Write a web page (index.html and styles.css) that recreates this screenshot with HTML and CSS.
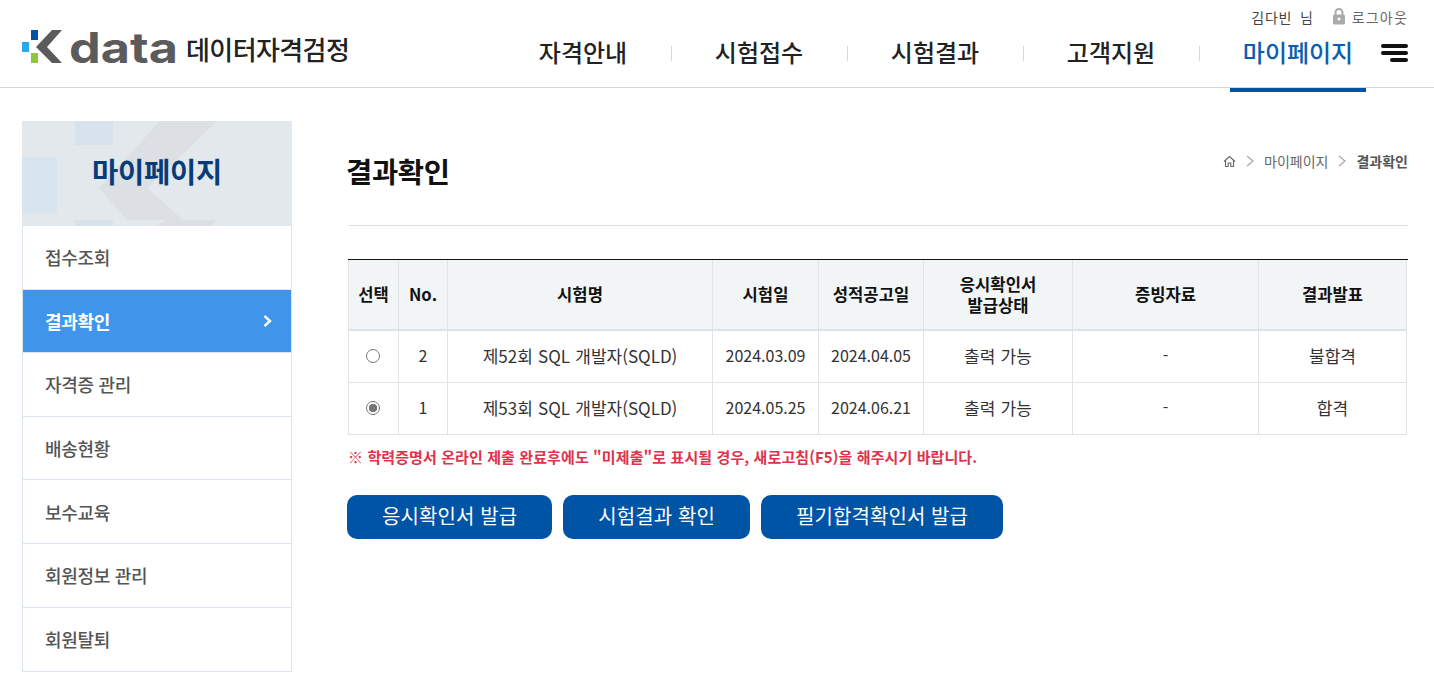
FILE: index.html
```html
<!DOCTYPE html>
<html lang="ko">
<head>
  <meta charset="UTF-8" />
  <meta name="viewport" content="width=device-width, initial-scale=1.0"/>
  <title>결과확인 - 데이터자격검정</title>
  <link rel="stylesheet" href="styles.css">
</head>
<body>

  <header class="topo">
    <a class="logo" href="#">
      <svg class="logo-marca" width="40" height="34" viewBox="0 0 40 34" aria-hidden="true">
        <rect x="9" y="0" width="7" height="10" fill="#0054a6"/>
        <rect x="0" y="12" width="7" height="10" fill="#29a8ea"/>
        <rect x="9" y="23" width="7" height="10" fill="#8dc63f"/>
        <polygon points="30,0 40,0 25,17 40,33 30,33 14,17" fill="#5b5b5b"/>
      </svg>
      <span class="logo-data">data</span>
      <span class="logo-nome">데이터자격검정</span>
    </a>
    <div class="topo-direita">
      <div class="usuario">
        <span class="usuario-nome">김다빈 님</span>
        <span class="sair">
          <svg width="14" height="17" viewBox="0 0 14 17" aria-hidden="true">
            <path d="M3.5 7V4.5a3.5 3.5 0 0 1 7 0V7" fill="none" stroke="#aaa" stroke-width="2"/>
            <rect x="1" y="6.5" width="12" height="10" rx="1.5" fill="#aaa"/>
            <circle cx="7" cy="11" r="1.5" fill="#fff"/>
          </svg>
          로그아웃
        </span>
      </div>
      <nav class="menu">
        <a class="menu-item" href="#">자격안내</a>
        <a class="menu-item" href="#">시험접수</a>
        <a class="menu-item" href="#">시험결과</a>
        <a class="menu-item" href="#">고객지원</a>
        <a class="menu-item ativo" href="#">마이페이지</a>
        <div class="hamburguer"><i></i><i></i><i></i></div>
      </nav>
    </div>
  </header>

  <div class="conteudo">
    <aside class="lateral">
      <div class="lateral-topo">
        <svg class="lateral-fundo" width="270" height="105" viewBox="0 0 270 105" aria-hidden="true">
          <rect x="53" y="0" width="38" height="24" fill="#d8e2ec"/>
          <rect x="0" y="36" width="35" height="57" fill="#d8e4ee"/>
          <rect x="53" y="99" width="38" height="6" fill="#d8e2ec"/>
          <polygon points="138,0 195,0 125,67 161,99 105,99 77,67" fill="#dcdfe3"/>
          <polygon points="143,99 195,99 188,105 135,105" fill="#dcdfe3"/>
        </svg>
        <h2>마이페이지</h2>
      </div>
      <ul class="lateral-menu">
        <li><a href="#">접수조회</a></li>
        <li class="ativo"><a href="#">결과확인
          <svg width="9" height="12" viewBox="0 0 9 12" aria-hidden="true"><polyline points="1.5,1 7,6 1.5,11" fill="none" stroke="#fff" stroke-width="2.4"/></svg>
        </a></li>
        <li><a href="#">자격증 관리</a></li>
        <li><a href="#">배송현황</a></li>
        <li><a href="#">보수교육</a></li>
        <li><a href="#">회원정보 관리</a></li>
        <li><a href="#">회원탈퇴</a></li>
      </ul>
    </aside>

    <main class="principal">
      <div class="titulo-linha">
        <h1>결과확인</h1>
        <div class="trilha">
          <svg width="13" height="13" viewBox="0 0 13 13" aria-hidden="true">
            <path d="M1 6.5 6.5 1.5 12 6.5M2.5 5.5V11.5H5.2V8H7.8V11.5H10.5V5.5" fill="none" stroke="#666" stroke-width="1.1"/>
          </svg>
          <svg class="seta" width="8" height="12" viewBox="0 0 8 12" aria-hidden="true"><polyline points="1,1 7,6 1,11" fill="none" stroke="#aaa" stroke-width="1.4"/></svg>
          <span>마이페이지</span>
          <svg class="seta" width="8" height="12" viewBox="0 0 8 12" aria-hidden="true"><polyline points="1,1 7,6 1,11" fill="none" stroke="#aaa" stroke-width="1.4"/></svg>
          <strong>결과확인</strong>
        </div>
      </div>

      <div class="tabela-caixa">
        <table class="tabela">
          <colgroup>
            <col class="c1"><col class="c2"><col class="c3"><col class="c4"><col class="c5"><col class="c6"><col class="c7"><col class="c8">
          </colgroup>
          <thead>
            <tr>
              <th>선택</th><th>No.</th><th>시험명</th><th>시험일</th><th>성적공고일</th><th>응시확인서<br>발급상태</th><th>증빙자료</th><th>결과발표</th>
            </tr>
          </thead>
          <tbody>
            <tr>
              <td><span class="radio"></span></td><td>2</td><td class="kr">제52회 SQL 개발자(SQLD)</td><td>2024.03.09</td><td>2024.04.05</td><td class="kr">출력 가능</td><td>-</td><td class="kr">불합격</td>
            </tr>
            <tr>
              <td><span class="radio marcado"></span></td><td>1</td><td class="kr">제53회 SQL 개발자(SQLD)</td><td>2024.05.25</td><td>2024.06.21</td><td class="kr">출력 가능</td><td>-</td><td class="kr">합격</td>
            </tr>
          </tbody>
        </table>
      </div>

      <p class="aviso">※ 학력증명서 온라인 제출 완료후에도 "미제출"로 표시될 경우, 새로고침(F5)을 해주시기 바랍니다.</p>

      <div class="botoes">
        <a class="botao" href="#">응시확인서 발급</a>
        <a class="botao" href="#">시험결과 확인</a>
        <a class="botao" href="#">필기합격확인서 발급</a>
      </div>
    </main>
  </div>

</body>
</html>
```

FILE: styles.css
```css
* {
  box-sizing: border-box;
}

html, body {
  margin: 0;
  height: 696px;
  overflow: hidden;
}

body {
  font-family: "Noto Sans CJK KR", "Noto Sans", sans-serif;
  background: #fff;
  color: #222;
}

a {
  color: inherit;
  text-decoration: none;
}

/* topo */
.topo {
  display: flex;
  justify-content: space-between;
  height: 88px;
  padding: 0 26px 0 22px;
  border-bottom: 1px solid #d5d5d5;
}

.logo {
  display: flex;
  align-items: flex-start;
  padding-top: 30px;
}

.logo-marca {
  flex: none;
}

.logo-data {
  width: 117px;
  margin-top: 2px;
  margin-left: 7px;
  font-family: "Inter", sans-serif;
  font-size: 42px;
  font-weight: 700;
  line-height: 32px;
  color: #5b5b5b;
  transform: scaleX(1.2);
  transform-origin: left center;
}

.logo-nome {
  font-size: 26px;
  font-weight: 500;
  line-height: 38px;
  letter-spacing: -0.6px;
  color: #222;
}

.topo-direita {
  display: flex;
  flex-direction: column;
  align-items: flex-end;
}

.usuario {
  display: flex;
  flex: none;
  align-items: center;
  gap: 18px;
  height: 33px;
  font-size: 14px;
  letter-spacing: 1.2px;
  color: #555;
}

.usuario-nome {
  color: #444;
  letter-spacing: 0.8px;
  word-spacing: 3px;
}

.sair {
  display: flex;
  align-items: center;
  gap: 6px;
  color: #666;
}

.menu {
  display: flex;
  flex: none;
  align-items: flex-start;
}

.menu-item {
  position: relative;
  display: block;
  width: 176px;
  height: 55px;
  text-align: center;
  font-size: 24px;
  font-weight: 500;
  line-height: 38px;
  color: #222;
}

.menu-item + .menu-item::before {
  content: "";
  position: absolute;
  left: 0;
  top: 13px;
  width: 1px;
  height: 15px;
  background: #d8d8d8;
}

.menu-item.ativo {
  width: 136px;
  margin-left: 31px;
  color: #0a5eb0;
}

.menu-item.ativo::before {
  left: -31px;
}

.menu-item.ativo::after {
  content: "";
  position: absolute;
  left: 0;
  right: 0;
  top: 55px;
  height: 4px;
  background: #0054a6;
}

.hamburguer {
  display: flex;
  flex-direction: column;
  align-items: flex-end;
  gap: 3px;
  width: 27px;
  margin-left: 15px;
  padding-top: 10.5px;
}

.hamburguer i {
  display: block;
  width: 27px;
  height: 4px;
  border-radius: 2px;
  background: #111;
}

.hamburguer i:last-child {
  width: 18px;
}

/* conteudo */
.conteudo {
  display: flex;
  gap: 56px;
  padding: 33px 26px 0 22px;
}

.lateral {
  width: 270px;
  flex: none;
}

.lateral-topo {
  position: relative;
  display: flex;
  align-items: center;
  justify-content: center;
  height: 105px;
  padding-bottom: 6px;
  overflow: hidden;
  background: #e3e8ed;
}

.lateral-fundo {
  position: absolute;
  left: 0;
  top: 0;
}

.lateral-topo h2 {
  position: relative;
  margin: 0;
  font-size: 28.5px;
  font-weight: 700;
  letter-spacing: -0.2px;
  color: #073c78;
}

.lateral-menu {
  margin: 0;
  padding: 0;
  list-style: none;
  border: 1px solid #dbe4ec;
  border-top: 0;
}

.lateral-menu li {
  height: 63.6px;
  border-bottom: 1px solid #dbe4ec;
}

.lateral-menu li:last-child {
  border-bottom: 0;
}

.lateral-menu a {
  display: flex;
  align-items: center;
  justify-content: space-between;
  height: 100%;
  padding: 0 19px 0 22px;
  font-size: 18px;
  font-weight: 500;
  letter-spacing: -0.3px;
  color: #555;
}

.lateral-menu .ativo {
  background: #4095ea;
}

.lateral-menu .ativo a {
  font-weight: 700;
  color: #fff;
}

/* principal */
.principal {
  flex: 1;
}

.titulo-linha {
  display: flex;
  justify-content: space-between;
  height: 105px;
  border-bottom: 1px solid #e0e0e0;
}

.titulo-linha h1 {
  margin: 30px 0 0 -2px;
  font-size: 28.5px;
  font-weight: 700;
  line-height: 40px;
  letter-spacing: -0.3px;
  color: #111;
}

.trilha {
  display: flex;
  align-items: center;
  gap: 8px;
  height: 20px;
  margin-top: 30px;
  font-size: 14px;
  color: #666;
}

.trilha strong {
  font-weight: 700;
  color: #555;
}

.seta {
  margin: 0 2px;
}

.tabela-caixa {
  margin-top: 33px;
  border-top: 1px solid #111;
}

.tabela {
  width: 1059px;
  border-collapse: collapse;
  table-layout: fixed;
  font-size: 16px;
}

.c1 { width: 50px; }
.c2 { width: 49px; }
.c3 { width: 265px; }
.c4 { width: 106px; }
.c5 { width: 105px; }
.c6 { width: 149px; }
.c7 { width: 186px; }
.c8 { width: 148px; }

.tabela th, .tabela td {
  border: 1px solid #e0e4e8;
  text-align: center;
  padding: 0;
}

.tabela th {
  height: 70px;
  border-top: 0;
  border-bottom: 2px solid #dde2e6;
  background: #f2f5f6;
  font-size: 16.6px;
  font-weight: 700;
  line-height: 21px;
  color: #111;
}

.tabela td {
  height: 52px;
  padding-bottom: 2px;
  color: #333;
}

.tabela td.kr {
  font-size: 17px;
  word-spacing: 0.5px;
}

.radio {
  display: inline-block;
  width: 14px;
  height: 14px;
  margin: -4px 2px 0 0;
  vertical-align: middle;
  border: 1px solid #777;
  border-radius: 50%;
  background: #fff;
}

.radio.marcado {
  background: radial-gradient(circle, #777 0 4px, #fff 4.5px);
}

.aviso {
  margin: 12px 0 0;
  font-size: 15px;
  font-weight: 700;
  line-height: 20px;
  letter-spacing: 0.1px;
  color: #e0324b;
}

.botoes {
  display: flex;
  gap: 11px;
  margin: 28px 0 0 -1px;
}

.botao {
  display: block;
  height: 44px;
  padding: 0 35px;
  border-radius: 10px;
  background: #0054a6;
  font-size: 20px;
  line-height: 41px;
  letter-spacing: 0.1px;
  color: #fff;
}
```
